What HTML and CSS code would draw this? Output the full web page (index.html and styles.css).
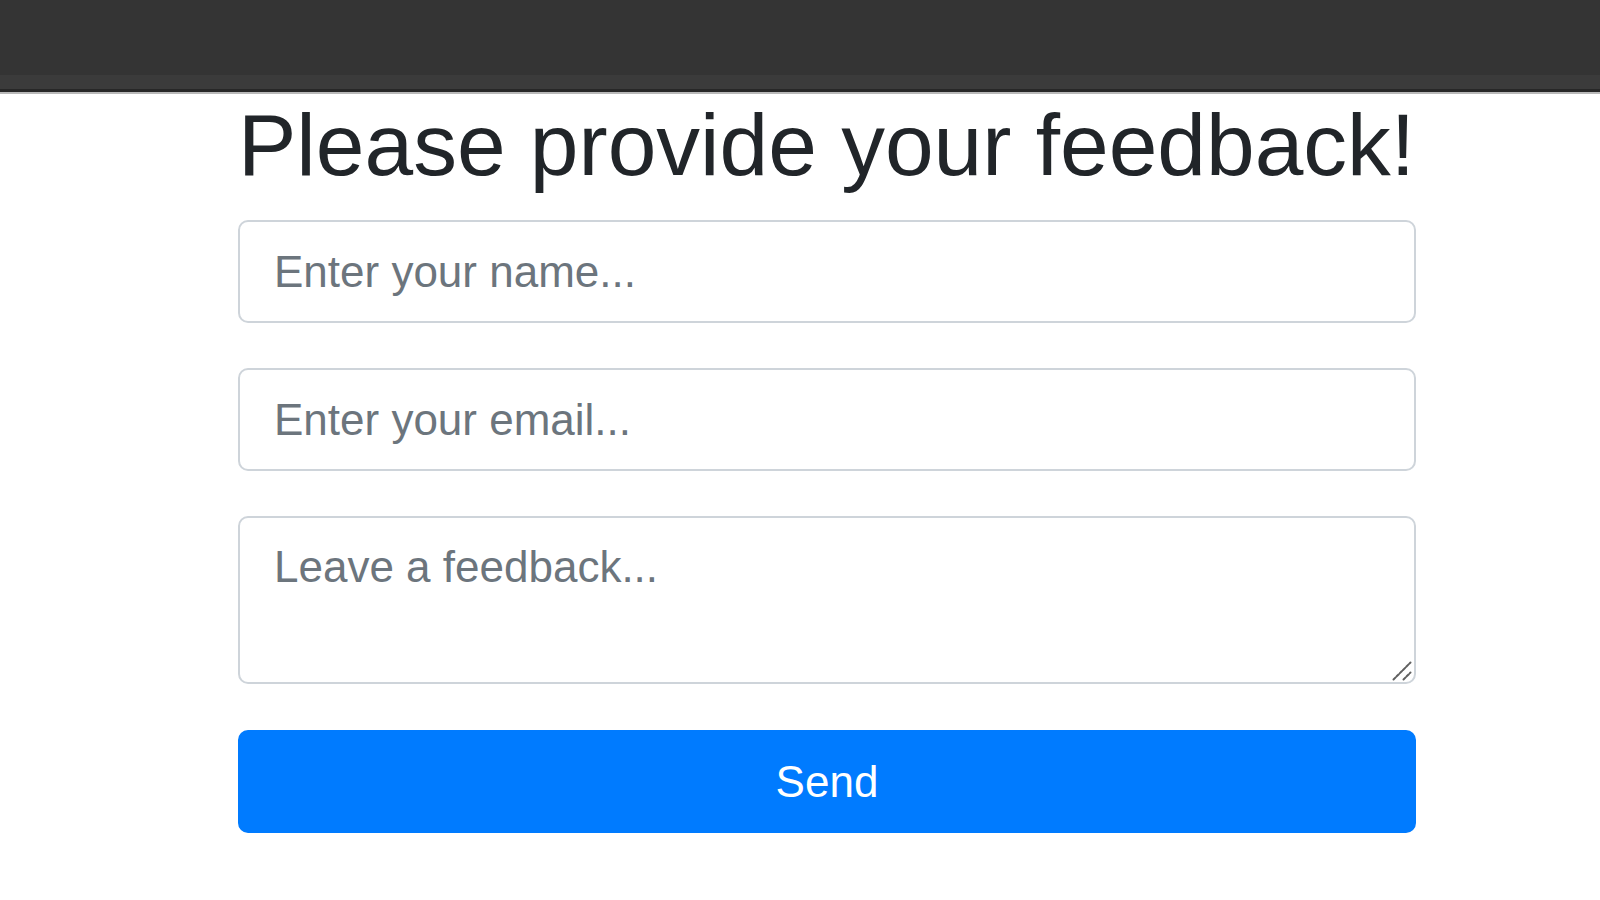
FILE: index.html
```html
<!DOCTYPE html>
<html lang="en">
<head>
<meta charset="utf-8">
<title>Feedback</title>
<link rel="stylesheet" href="styles.css">
</head>
<body>
<header class="topbar"><div class="topbar-band"></div></header>
<main class="page">
  <form class="feedback-form">
    <h1 class="title">Please provide your feedback!</h1>
    <input class="field" type="text" placeholder="Enter your name...">
    <input class="field" type="email" placeholder="Enter your email...">
    <div class="area-wrap">
      <textarea class="field field-area" placeholder="Leave a feedback..."></textarea>
      <svg class="grip" width="20" height="20" viewBox="0 0 20 20" aria-hidden="true">
        <line x1="1.5" y1="18.5" x2="18.5" y2="1.5" stroke="#5f5f5f" stroke-width="2" stroke-dasharray="3 1.5" stroke-linecap="round"/>
        <line x1="11.5" y1="18.5" x2="18.5" y2="11.5" stroke="#5f5f5f" stroke-width="2" stroke-dasharray="3 1.5" stroke-linecap="round"/>
      </svg>
    </div>
    <button class="send-btn" type="button">Send</button>
  </form>
</main>
</body>
</html>
```
FILE: styles.css
```css
* { box-sizing: border-box; }
html, body { margin: 0; padding: 0; background: #fff; }
body {
  font-family: "Liberation Sans", Arial, sans-serif;
  color: #212529;
}
.topbar {
  height: 94px;
  background: #343434;
  border-bottom: 2px solid #b9b9b9;
  display: flex;
  flex-direction: column;
  justify-content: flex-end;
}
.topbar-band {
  height: 17px;
  background: #3b3b3b;
  border-bottom: 3px solid #272727;
}
.page {
  padding-left: 238px;
}
.feedback-form {
  width: 1178px;
  display: flex;
  flex-direction: column;
}
.title {
  margin: -1px 0 22px 0;
  font-size: 87.5px;
  font-weight: 400;
  line-height: 1.2;
  white-space: nowrap;
  color: #212529;
}
.field {
  display: block;
  width: 100%;
  height: 103px;
  margin: 0 0 45px 0;
  padding: 16px 34px;
  font-family: inherit;
  font-size: 44px;
  line-height: 1.5;
  color: #495057;
  background: #fff;
  border: 2px solid #ced4da;
  border-radius: 10px;
  outline: none;
}
.field::placeholder { color: #6c757d; opacity: 1; }
.area-wrap {
  position: relative;
  margin-bottom: 46px;
}
.field-area {
  height: 168px;
  margin: 0;
  resize: none;
}
.grip {
  position: absolute;
  right: 4px;
  bottom: 3px;
}
.send-btn {
  display: block;
  width: 100%;
  height: 103px;
  padding: 0;
  font-family: inherit;
  font-size: 44px;
  line-height: 1.5;
  color: #fff;
  background: #007bff;
  border: 2px solid #007bff;
  border-radius: 10px;
  cursor: pointer;
}
```
